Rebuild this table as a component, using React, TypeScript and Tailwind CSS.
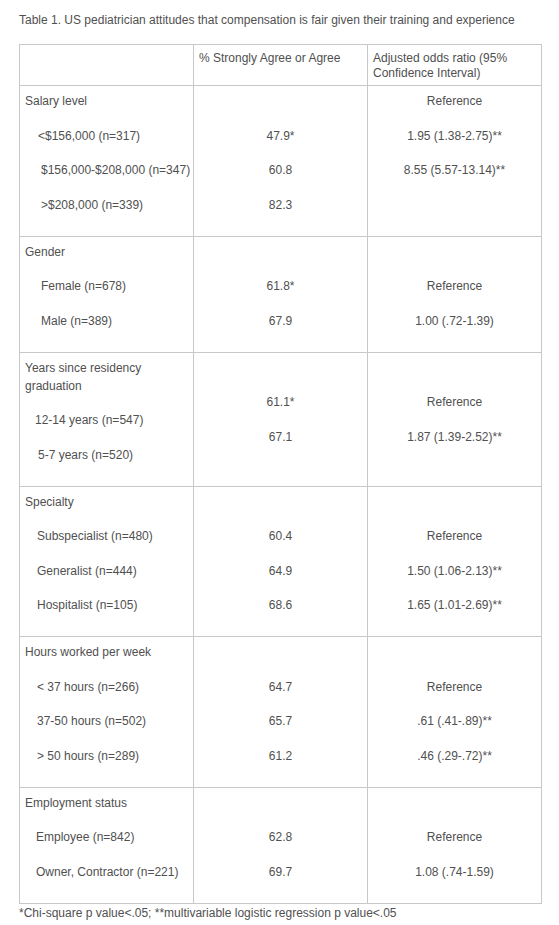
type Line = { t: string; pl?: number };

type Section = {
  left: Line[];
  mid: string[];
  right: string[];
};

const sections: Section[] = [
  {
    left: [
      { t: 'Salary level' },
      { t: '<$156,000 (n=317)', pl: 13 },
      { t: '$156,000-$208,000 (n=347)', pl: 16 },
      { t: '>$208,000 (n=339)', pl: 16 },
    ],
    mid: ['', '47.9*', '60.8', '82.3'],
    right: ['Reference', '1.95 (1.38-2.75)**', '8.55 (5.57-13.14)**'],
  },
  {
    left: [
      { t: 'Gender' },
      { t: 'Female (n=678)', pl: 16 },
      { t: 'Male (n=389)', pl: 16 },
    ],
    mid: ['', '61.8*', '67.9'],
    right: ['', 'Reference', '1.00 (.72-1.39)'],
  },
  {
    left: [
      { t: 'Years since residency graduation' },
      { t: '12-14 years (n=547)', pl: 10 },
      { t: '5-7 years (n=520)', pl: 13 },
    ],
    mid: ['', '61.1*', '67.1'],
    right: ['', 'Reference', '1.87 (1.39-2.52)**'],
  },
  {
    left: [
      { t: 'Specialty' },
      { t: 'Subspecialist (n=480)', pl: 12 },
      { t: 'Generalist (n=444)', pl: 12 },
      { t: 'Hospitalist (n=105)', pl: 12 },
    ],
    mid: ['', '60.4', '64.9', '68.6'],
    right: ['', 'Reference', '1.50 (1.06-2.13)**', '1.65 (1.01-2.69)**'],
  },
  {
    left: [
      { t: 'Hours worked per week' },
      { t: '< 37 hours (n=266)', pl: 12 },
      { t: '37-50 hours (n=502)', pl: 12 },
      { t: '> 50 hours (n=289)', pl: 12 },
    ],
    mid: ['', '64.7', '65.7', '61.2'],
    right: ['', 'Reference', '.61 (.41-.89)**', '.46 (.29-.72)**'],
  },
  {
    left: [
      { t: 'Employment status' },
      { t: 'Employee (n=842)', pl: 11 },
      { t: 'Owner, Contractor (n=221)', pl: 11 },
    ],
    mid: ['', '62.8', '69.7'],
    right: ['', 'Reference', '1.08 (.74-1.59)'],
  },
];

function Cell({ lines, center }: { lines: Line[]; center?: boolean }) {
  return (
    <td className="border border-[#c8c8c8] align-top px-[5px] pt-[6px] pb-[22px]">
      <div className={`flex flex-col gap-[16.5px] ${center ? 'text-center' : 'text-left'}`}>
        {lines.map((l, i) => (
          <p
            key={i}
            className={`leading-[18px] min-h-[18px] ${l.pl ? 'whitespace-nowrap' : ''}`}
            style={l.pl ? { paddingLeft: l.pl } : undefined}
          >
            {l.t}
          </p>
        ))}
      </div>
    </td>
  );
}

export default function App() {
  return (
    <div
      className="min-h-[925px] bg-white pl-[19px] pt-[11px] text-[12px] text-[#505050]"
      style={{ fontFamily: '"Liberation Sans", Arial, sans-serif' }}
    >
      <p className="leading-[18px] mb-[15px]">
        Table 1. US pediatrician attitudes that compensation is fair given their training and experience
      </p>
      <table className="w-[523px] table-fixed border-collapse border border-[#c8c8c8]">
        <thead>
          <tr>
            <th className="w-1/3 border border-[#c8c8c8] px-[5px] pt-[6px] pb-[5px] font-normal text-left align-top leading-[14.5px]"></th>
            <th className="w-1/3 border border-[#c8c8c8] px-[5px] pt-[6px] pb-[5px] font-normal text-left align-top leading-[14.5px]">
              % Strongly Agree or Agree
            </th>
            <th className="w-1/3 border border-[#c8c8c8] px-[5px] pt-[6px] pb-[5px] font-normal text-left align-top leading-[14.5px]">
              Adjusted odds ratio (95% Confidence Interval)
            </th>
          </tr>
        </thead>
        <tbody>
          {sections.map((s, i) => (
            <tr key={i}>
              <Cell lines={s.left} />
              <Cell lines={s.mid.map((t) => ({ t }))} center />
              <Cell lines={s.right.map((t) => ({ t }))} center />
            </tr>
          ))}
        </tbody>
      </table>
      <p className="leading-[18px]">*Chi-square p value&lt;.05; **multivariable logistic regression p value&lt;.05</p>
    </div>
  );
}
